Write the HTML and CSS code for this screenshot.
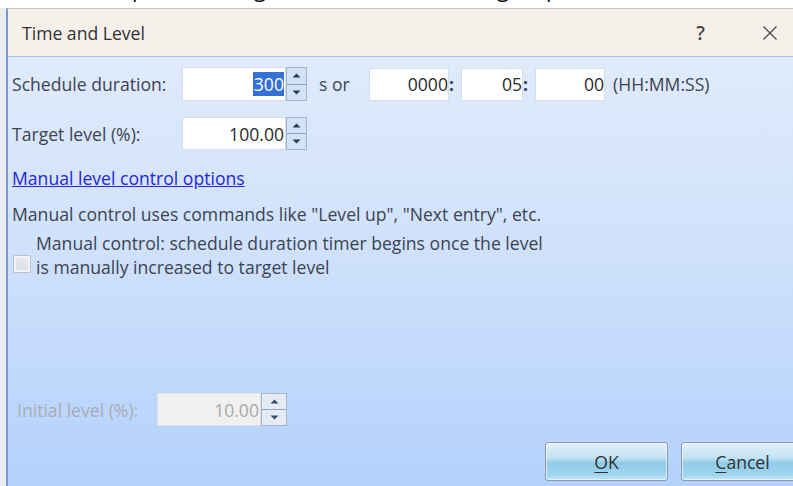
FILE: index.html
```html
<!DOCTYPE html>
<html lang="en">
<head>
<meta charset="utf-8">
<title>Time and Level</title>
<link rel="stylesheet" href="styles.css">
</head>
<body>
  <div class="behind">
    <div class="behind-line"><span class="g1">p</span><span class="g2">g</span><span class="g3">g</span><span class="g4">p</span></div>
  </div>

  <div class="window">
    <div class="titlebar">
      <span class="title">Time and Level</span>
      <span class="help">?</span>
      <svg class="close" width="16" height="16" viewBox="0 0 16 16"><path d="M1.5 1.5 L14.5 14.5 M14.5 1.5 L1.5 14.5" stroke="#4a4a4a" stroke-width="1.3" fill="none"/></svg>
    </div>

    <div class="content">
      <div class="row row-duration">
        <span class="lbl">Schedule duration:</span>
        <div class="spin">
          <div class="field"><span class="selected">300</span></div>
          <div class="arrows">
            <span class="arrow up"><svg width="9" height="5" viewBox="0 0 9 5"><path d="M0.5 4.5 L4.5 0.5 L8.5 4.5 Z" fill="#2a3c5c"/></svg></span>
            <span class="arrow down"><svg width="9" height="5" viewBox="0 0 9 5"><path d="M0.5 0.5 L4.5 4.5 L8.5 0.5 Z" fill="#2a3c5c"/></svg></span>
          </div>
        </div>
        <span class="unit">s or</span>
        <div class="box box-hh">0000</div><span class="colon">:</span>
        <div class="box box-mm">05</div><span class="colon">:</span>
        <div class="box box-ss">00</div>
        <span class="fmt">(HH:MM:SS)</span>
      </div>

      <div class="row row-target">
        <span class="lbl">Target level (%):</span>
        <div class="spin">
          <div class="field">100.00</div>
          <div class="arrows">
            <span class="arrow up"><svg width="9" height="5" viewBox="0 0 9 5"><path d="M0.5 4.5 L4.5 0.5 L8.5 4.5 Z" fill="#2a3c5c"/></svg></span>
            <span class="arrow down"><svg width="9" height="5" viewBox="0 0 9 5"><path d="M0.5 0.5 L4.5 4.5 L8.5 0.5 Z" fill="#2a3c5c"/></svg></span>
          </div>
        </div>
      </div>

      <a class="link" href="#">Manual level control options</a>

      <p class="desc">Manual control uses commands like "Level up", "Next entry", etc.</p>

      <div class="check">
        <span class="checkbox"></span>
        <span class="check-text">Manual control: schedule duration timer begins once the level<br>is manually increased to target level</span>
      </div>

      <div class="row row-initial">
        <span class="lbl lbl-disabled">Initial level (%):</span>
        <div class="spin spin-disabled">
          <div class="field">10.00</div>
          <div class="arrows">
            <span class="arrow up"><svg width="9" height="5" viewBox="0 0 9 5"><path d="M0.5 4.5 L4.5 0.5 L8.5 4.5 Z" fill="#3a4d6e"/></svg></span>
            <span class="arrow down"><svg width="9" height="5" viewBox="0 0 9 5"><path d="M0.5 0.5 L4.5 4.5 L8.5 0.5 Z" fill="#3a4d6e"/></svg></span>
          </div>
        </div>
      </div>

      <div class="buttons">
        <button class="btn"><u>O</u>K</button>
        <button class="btn"><u>C</u>ancel</button>
      </div>
    </div>
  </div>
</body>
</html>
```

FILE: styles.css
```css
html, body {
  margin: 0;
  padding: 0;
  width: 793px;
  height: 486px;
  overflow: hidden;
  background: #e9ecf0;
  font-family: "Open Sans", "Noto Sans", sans-serif;
}

/* strip of the page above the dialog: only descenders of its big text show */
.behind {
  height: 8px;
  overflow: hidden;
  background: #ffffff;
}
.behind-line {
  display: flex;
  margin-top: -24px;
  font-size: 22px;
  line-height: 24px;
  color: #111;
}
.behind-line span { display: inline-block; width: 14px; }
.g1 { margin-left: 132px; }
.g2 { margin-left: 108px; }
.g3 { margin-left: 229px; }
.g4 { margin-left: 35px; }

.window {
  margin-left: 6px;
  height: 478px;
  display: flex;
  flex-direction: column;
  border-left: 2px solid #7c98c9;
  border-top: 1px solid #c4c8cf;
}

.titlebar {
  height: 47px;
  flex: none;
  display: flex;
  align-items: center;
  background: #f6f0eb;
  border-bottom: 1px solid #a9c6ee;
  color: #333;
}
.title {
  margin-left: 14px;
  font-size: 17.6px;
}
.help {
  margin-left: auto;
  font-size: 19px;
  font-weight: 600;
  color: #444;
}
.close {
  margin-left: 57px;
  margin-right: 15px;
}

.content {
  flex: 1;
  display: flex;
  flex-direction: column;
  align-items: flex-start;
  padding: 10px 0 0 4px;
  background: linear-gradient(#e0ebfb, #cfe1fb 45%, #b3d1fc);
  color: #3c4454;
  font-size: 17.6px;
}

.row {
  display: flex;
  align-items: center;
}
.lbl {
  width: 170px;
}

.spin {
  display: flex;
  height: 34px;
}
.field {
  width: 101px;
  background: #fff;
  border: 1px solid #d5dfec;
  display: flex;
  align-items: center;
  justify-content: flex-end;
  padding-right: 1px;
  color: #2a2a2a;
}
.selected {
  background: #3570d4;
  color: #fff;
  padding: 0 0 0 1px;
  line-height: 24px;
}
.arrows {
  width: 19px;
  display: flex;
  flex-direction: column;
  border: 1px solid #9fb4d2;
  background: #d3e2f5;
}
.arrow {
  flex: 1;
  display: flex;
  align-items: center;
  justify-content: center;
}
.arrow.up { border-bottom: 1px solid #8da5c8; }

.unit {
  margin-left: 12px;
  width: 50px;
}
.box {
  height: 33px;
  background: #fff;
  border: 1px solid #d5dfec;
  box-sizing: border-box;
  display: flex;
  align-items: center;
  justify-content: flex-end;
  padding-right: 0;
  color: #2a2a2a;
}
.box-hh { width: 80px; }
.box-mm { width: 62px; }
.box-ss { width: 70px; }
.colon {
  width: 12px;
  font-weight: 700;
  color: #3a4660;
}
.fmt {
  margin-left: 8px;
}

.row-target {
  margin-top: 16px;
}
.row-target .spin { height: 33px; }

.link {
  margin-top: 16px;
  line-height: 24px;
  color: #2626d8;
  text-decoration: underline;
}

.desc {
  margin: 12px 0 0;
  line-height: 24px;
}

.check {
  margin-top: 5px;
  display: flex;
  align-items: flex-start;
}
.checkbox {
  flex: none;
  width: 16px;
  height: 16px;
  margin: 24px 5px 0 1px;
  border: 1px solid #bcc2cc;
  border-radius: 2px;
  background: linear-gradient(#e9ebee, #dadde2);
  box-shadow: inset 0 0 0 2px #f4f5f7;
}
.check-text {
  line-height: 24px;
}

.row-initial {
  margin-top: 114px;
  margin-left: 5px;
}
.lbl-disabled {
  width: 140px;
  color: #a7adb6;
}
.spin-disabled { height: 33px; }
.spin-disabled .field {
  background: #f0f0f0;
  border-color: #dde2e8;
  color: #a9a9a9;
}
.spin-disabled .arrows {
  width: 24px;
  background: #e4ebf3;
  border-color: #a8b6c8;
}

.buttons {
  margin-top: 16px;
  padding-left: 533px;
  display: flex;
  gap: 13px;
}
.btn {
  width: 123px;
  height: 39px;
  flex: none;
  border: 1px solid #8b9aa8;
  border-radius: 3px;
  background: linear-gradient(#e1f1fa 0%, #c2e3f4 40%, #8fcbe9 55%, #9fd5ef 85%, #bfe6f6 100%);
  box-shadow: inset 0 0 0 1px rgba(255, 255, 255, 0.6);
  font-family: "Open Sans", "Noto Sans", sans-serif;
  font-size: 17.6px;
  color: #333;
  padding: 0;
}
.btn u { text-underline-offset: 3px; }
```
